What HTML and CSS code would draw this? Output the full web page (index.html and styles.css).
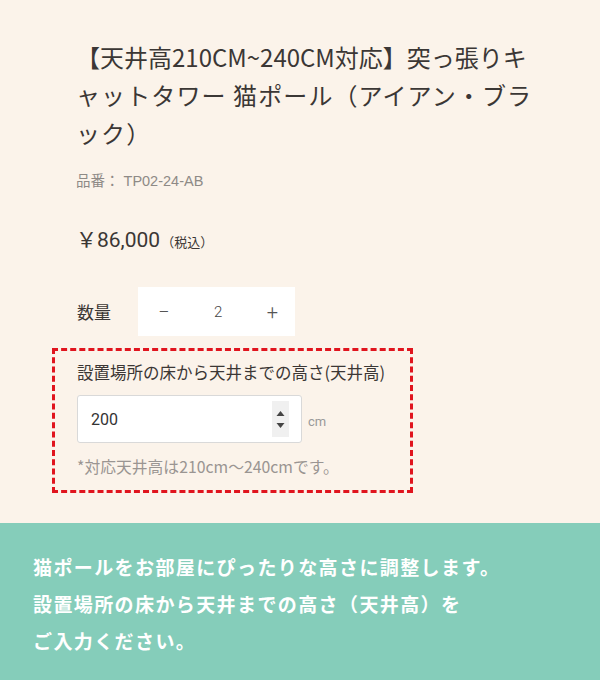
FILE: index.html
```html
<!DOCTYPE html>
<html lang="ja">
<head>
<meta charset="utf-8">
<link rel="stylesheet" href="styles.css">
</head>
<body>
<div class="page">
  <section class="product">
    <h1 class="title">【天井高210CM~240CM対応】突っ張りキ<br><span class="wide">ャットタワー 猫ポール（アイアン・ブラ</span><br><span class="wide">ック）</span></h1>
    <p class="sku">品番： TP02-24-AB</p>
    <p class="price">￥86,000<span class="tax">（税込）</span></p>
    <div class="qty-row">
      <span class="qty-label">数量</span>
      <div class="qty">
        <span class="qty-btn">−</span>
        <span class="qty-val">2</span>
        <span class="qty-btn">+</span>
      </div>
    </div>
    <div class="height-box">
      <p class="h-label">設置場所の床から天井までの高さ(天井高)</p>
      <div class="h-row">
        <div class="h-input">
          <span class="h-val">200</span>
          <span class="spin">
            <svg width="17" height="36" viewBox="0 0 17 36"><path d="M4.5 15 L8.5 10 L12.5 15 Z" fill="#444"/><path d="M4.5 22 L12.5 22 L8.5 27 Z" fill="#444"/></svg>
          </span>
        </div>
        <span class="unit">cm</span>
      </div>
      <p class="h-note">*対応天井高は210cm〜240cmです。</p>
    </div>
  </section>
  <section class="banner">
    <p>猫ポールをお部屋にぴったりな高さに調整します。<br>設置場所の床から天井までの高さ（天井高）を<br>ご入力ください。</p>
  </section>
</div>
</body>
</html>
```
FILE: styles.css
```css
* { box-sizing: border-box; }
html, body { margin: 0; padding: 0; }
body {
  background: #fbf3ea;
  font-family: "Noto Sans CJK JP", "Noto Sans", sans-serif;
  color: #3b3735;
}
.page { width: 600px; height: 680px; overflow: hidden; }
.product { padding: 38px 52px 0 52px; height: 523px; }
.title {
  margin: 0 0 0 24px;
  width: 480px;
  font-size: 24px;
  font-weight: 400;
  line-height: 38px;
  color: #3b3735;
}
.wide { letter-spacing: 1.1px; }
.sku {
  margin: 19px 0 0 24px;
  font-size: 14.5px;
  line-height: 20px;
  color: #8e8a86;
  font-family: "Liberation Sans", "Noto Sans CJK JP", sans-serif;
}
.price {
  margin: 34px 0 0 24px;
  font-size: 21px;
  line-height: 30px;
  font-family: "Roboto", "Noto Sans CJK JP", sans-serif;
  color: #3b3735;
}
.tax { font-size: 13px; margin-left: 1px; }
.qty-row {
  margin: 29px 0 0 25px;
  display: flex;
  align-items: center;
  gap: 27px;
}
.qty-label { font-size: 17px; }
.qty {
  width: 157px;
  height: 49px;
  background: #fff;
  display: flex;
  align-items: center;
  justify-content: space-between;
  padding: 0 17px 0 20px;
  font-family: "Roboto", sans-serif;
}
.qty-btn { font-size: 20px; color: #555; font-weight: 300; }
.qty-val { font-size: 15px; color: #444; font-weight: 300; }
.height-box {
  margin-top: 12px;
  width: 361px;
  height: 145px;
  border: 3px dashed #e0141e;
  padding: 10px 0 0 22px;
}
.h-label { margin: 0; font-size: 16.5px; line-height: 22px; color: #3b3735; }
.h-row { display: flex; align-items: center; gap: 6px; margin-top: 12px; }
.h-input {
  width: 225px;
  height: 48px;
  background: #fff;
  border: 1px solid #d9d9d9;
  border-radius: 3px;
  display: flex;
  align-items: center;
  justify-content: space-between;
  padding: 0 12px 0 13px;
}
.h-val { font-family: "Roboto", sans-serif; font-size: 16px; color: #333; }
.spin { background: #f0f0f0; display: flex; }
.unit { font-family: "Roboto", sans-serif; font-size: 13px; color: #999; margin-top: 5px; }
.h-note { margin: 14px 0 0 0; font-size: 15.8px; line-height: 20px; color: #9a9592; }
.banner {
  background: #85cdba;
  height: 157px;
  padding: 25px 0 0 33px;
}
.banner p {
  margin: 0;
  color: #fff;
  font-size: 19px;
  font-weight: 700;
  line-height: 37px;
  letter-spacing: 1.4px;
}
```
